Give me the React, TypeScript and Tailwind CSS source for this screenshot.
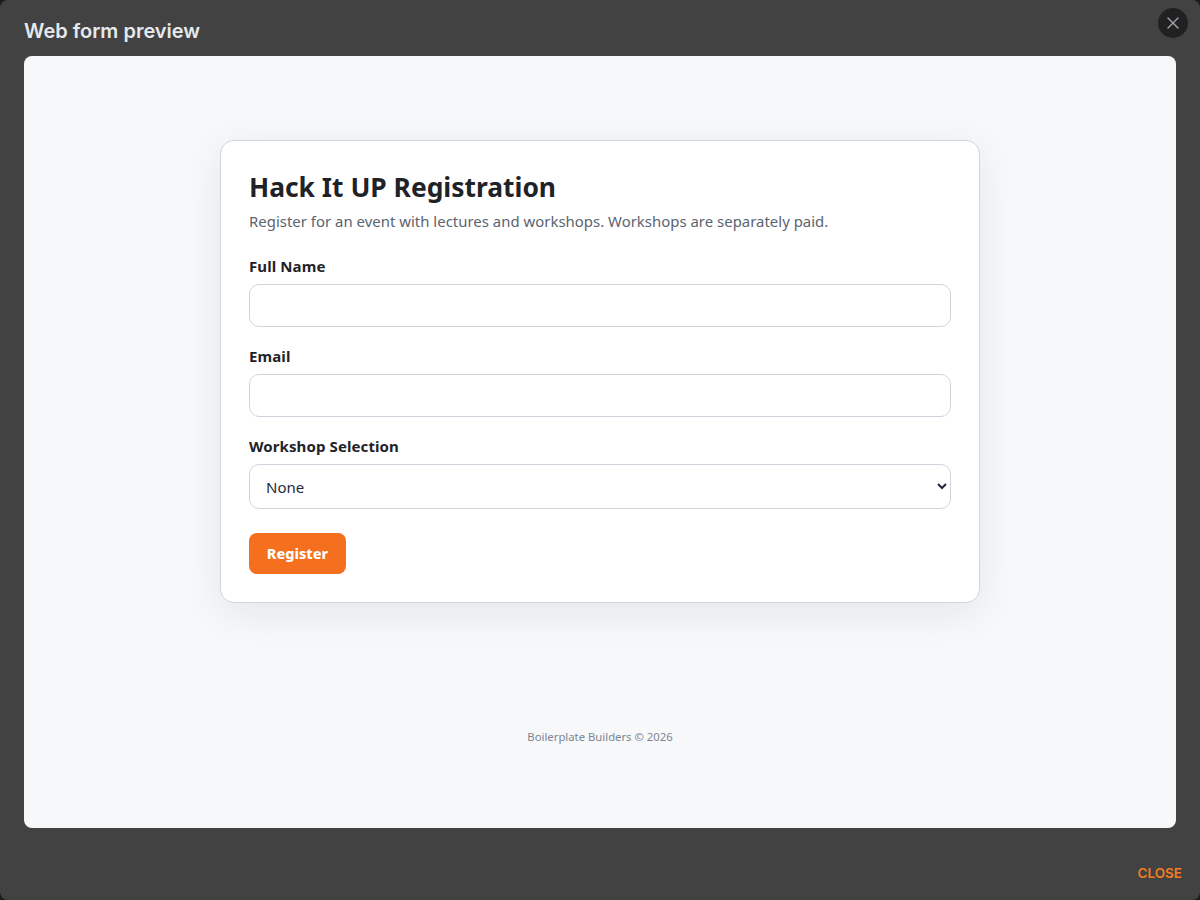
import React from 'react';
import { X } from 'lucide-react';

const bodyFont = "font-['Noto_Sans','Open_Sans',sans-serif]";

const Field: React.FC<{ label: string; id: string }> = ({ label, id }) => (
  <div className="mb-[18px]">
    <label htmlFor={id} className="block h-[22px] mb-[7px] text-[15px] leading-[22px] font-bold tracking-[0.1px] text-[#1f2328]">
      {label}
    </label>
    <input
      id={id}
      type="text"
      className="block w-full h-[43px] rounded-[10px] border border-[#d0d5dd] bg-white px-4"
    />
  </div>
);

export default function App() {
  return (
    <div className="w-full h-[900px] bg-[#1c1c1c] overflow-hidden">
      <div className="relative w-full h-full bg-[#424242] rounded-lg flex flex-col">
        <header className="h-[56px] shrink-0 px-6 flex items-center">
          <h2 className="text-[20px] leading-[28px] mt-[6px] font-semibold text-[#e5e9ee] font-['Inter',sans-serif]">
            Web form preview
          </h2>
        </header>

        <button className="absolute top-2 right-[12px] w-[30px] h-[30px] rounded-full bg-[#212121] flex items-center justify-center text-[#9aa0a6]">
          <X size={20} strokeWidth={1.8} />
        </button>

        <main className={`mx-6 h-[772px] shrink-0 rounded-lg bg-[#f7f8fa] pt-[84px] flex flex-col items-center ${bodyFont}`}>
          <section className="w-[760px] h-[463px] rounded-[14px] border border-[#d0d5dd] bg-white px-7 pt-[28px] shadow-[0_10px_40px_rgba(16,24,40,0.08)]">
            <h1 className="text-[26.4px] leading-[37px] font-bold text-[#1f2328]">Hack It UP Registration</h1>
            <p className="mt-[3px] mb-[22px] text-[14.9px] leading-[24px] tracking-[0.025px] text-[#5b6470]">
              Register for an event with lectures and workshops. Workshops are separately paid.
            </p>
            <Field id="name" label="Full Name" />
            <Field id="email" label="Email" />
            <div className="mb-[24px]">
              <label htmlFor="workshop" className="block h-[22px] mb-[7px] text-[15px] leading-[22px] font-bold tracking-[0.1px] text-[#1f2328]">
                Workshop Selection
              </label>
              <select
                id="workshop"
                className="block w-full h-[45px] rounded-[10px] border border-[#d0d5dd] bg-white pl-3 pr-1 text-[15px] text-[#1f2937]"
              >
                <option>None</option>
              </select>
            </div>
            <button className="w-[97px] h-[41px] rounded-[8px] bg-[#f4701f] text-white text-[14.5px] font-extrabold">
              Register
            </button>
          </section>
          <p className="mt-[126px] text-[11.3px] leading-[16px] text-[#7d8591]">Boilerplate Builders © 2026</p>
        </main>

        <footer className="flex-1 flex items-end justify-end pr-[18px] pb-[18px]">
          <button className="text-[13.5px] leading-[18px] font-semibold text-[#f47b20] font-['Inter',sans-serif]">CLOSE</button>
        </footer>
      </div>
    </div>
  );
}
